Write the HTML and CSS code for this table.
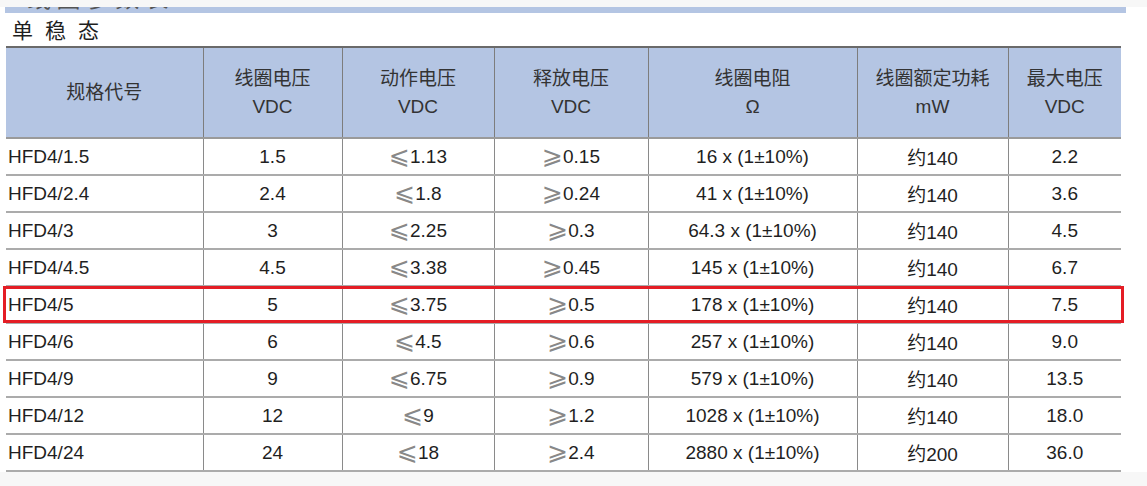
FILE: index.html
```html
<!DOCTYPE html>
<html lang="zh">
<head>
<meta charset="utf-8">
<title>单稳态</title>
<link rel="stylesheet" href="styles.css">
</head>
<body>
<div class="page">
  <div class="prev-bar"><span class="prev-title">线 圈 参 数 表</span></div>
  <h2 class="caption">单稳态</h2>
  <div class="table-wrap">
    <table class="spec">
      <colgroup>
        <col class="c1"><col class="c2"><col class="c3"><col class="c4"><col class="c5"><col class="c6"><col class="c7">
      </colgroup>
      <thead>
        <tr>
          <th>规格代号</th>
          <th>线圈电压<br>VDC</th>
          <th>动作电压<br>VDC</th>
          <th>释放电压<br>VDC</th>
          <th>线圈电阻<br>Ω</th>
          <th>线圈额定功耗<br>mW</th>
          <th>最大电压<br>VDC</th>
        </tr>
      </thead>
      <tbody>
        <tr><td>HFD4/1.5</td><td>1.5</td><td><span class="op">⩽</span>1.13</td><td><span class="op">⩾</span>0.15</td><td>16 x (1±10%)</td><td>约140</td><td>2.2</td></tr>
        <tr><td>HFD4/2.4</td><td>2.4</td><td><span class="op">⩽</span>1.8</td><td><span class="op">⩾</span>0.24</td><td>41 x (1±10%)</td><td>约140</td><td>3.6</td></tr>
        <tr><td>HFD4/3</td><td>3</td><td><span class="op">⩽</span>2.25</td><td><span class="op">⩾</span>0.3</td><td>64.3 x (1±10%)</td><td>约140</td><td>4.5</td></tr>
        <tr><td>HFD4/4.5</td><td>4.5</td><td><span class="op">⩽</span>3.38</td><td><span class="op">⩾</span>0.45</td><td>145 x (1±10%)</td><td>约140</td><td>6.7</td></tr>
        <tr><td>HFD4/5</td><td>5</td><td><span class="op">⩽</span>3.75</td><td><span class="op">⩾</span>0.5</td><td>178 x (1±10%)</td><td>约140</td><td>7.5</td></tr>
        <tr><td>HFD4/6</td><td>6</td><td><span class="op">⩽</span>4.5</td><td><span class="op">⩾</span>0.6</td><td>257 x (1±10%)</td><td>约140</td><td>9.0</td></tr>
        <tr><td>HFD4/9</td><td>9</td><td><span class="op">⩽</span>6.75</td><td><span class="op">⩾</span>0.9</td><td>579 x (1±10%)</td><td>约140</td><td>13.5</td></tr>
        <tr><td>HFD4/12</td><td>12</td><td><span class="op">⩽</span>9</td><td><span class="op">⩾</span>1.2</td><td>1028 x (1±10%)</td><td>约140</td><td>18.0</td></tr>
        <tr><td>HFD4/24</td><td>24</td><td><span class="op">⩽</span>18</td><td><span class="op">⩾</span>2.4</td><td>2880 x (1±10%)</td><td>约200</td><td>36.0</td></tr>
      </tbody>
    </table>
    <div class="highlight"></div>
  </div>
</div>
</body>
</html>
```

FILE: styles.css
```css
html, body {
  margin: 0;
  padding: 0;
}
body {
  background: #f7f7f7;
  font-family: "Liberation Sans", "Noto Sans CJK SC", sans-serif;
  color: #222;
}
.page {
  background: #ffffff;
  margin-top: 7px;
  height: 465px;
  padding-left: 5px;
  box-sizing: border-box;
}
.prev-bar {
  width: 1121px;
  height: 6px;
  background: #b4c5e3;
  overflow: hidden;
}
.prev-title {
  display: block;
  font-family: "Noto Sans CJK SC", sans-serif;
  font-size: 24px;
  line-height: 24px;
  margin-top: -22px;
  padding-left: 22px;
  color: #555;
}
.caption {
  margin: 0;
  height: 33px;
  line-height: 33px;
  padding-left: 7px;
  font-family: "Noto Sans CJK SC", sans-serif;
  font-size: 21px;
  font-weight: normal;
  letter-spacing: 12px;
  color: #1e1e1e;
}
.table-wrap {
  position: relative;
  margin-left: 1px;
  width: 1115px;
}
.spec {
  width: 1115px;
  table-layout: fixed;
  border-collapse: collapse;
  border-top: 2px solid #6a6a6a;
  font-size: 19px;
}
.c1 { width: 197px; }
.c2 { width: 139px; }
.c3 { width: 152px; }
.c4 { width: 154px; }
.c5 { width: 209px; }
.c6 { width: 151px; }
.c7 { width: 113px; }
.spec th {
  background: #b4c5e3;
  height: 89px;
  padding: 0;
  font-weight: normal;
  line-height: 28px;
  color: #333;
  border-left: 1px solid #7d7d7d;
  border-bottom: 2px solid #9a9a9a;
  text-align: center;
  vertical-align: middle;
}
.spec td {
  height: 35px;
  padding: 0;
  text-align: center;
  vertical-align: middle;
  border-left: 1px solid #8a8a8a;
  border-bottom: 2px solid #ababab;
  color: #1f1f1f;
}
.spec th:first-child,
.spec td:first-child {
  border-left: none;
}
.spec td:first-child {
  text-align: left;
  padding-left: 2px;
}
.op {
  font-family: "DejaVu Sans", sans-serif;
  font-size: 25px;
  line-height: 0;
  color: #888;
  vertical-align: -1px;
}
.highlight {
  position: absolute;
  left: -3px;
  top: 240px;
  width: 1121px;
  height: 37px;
  border: 3px solid #e41d25;
  box-sizing: border-box;
}
```
